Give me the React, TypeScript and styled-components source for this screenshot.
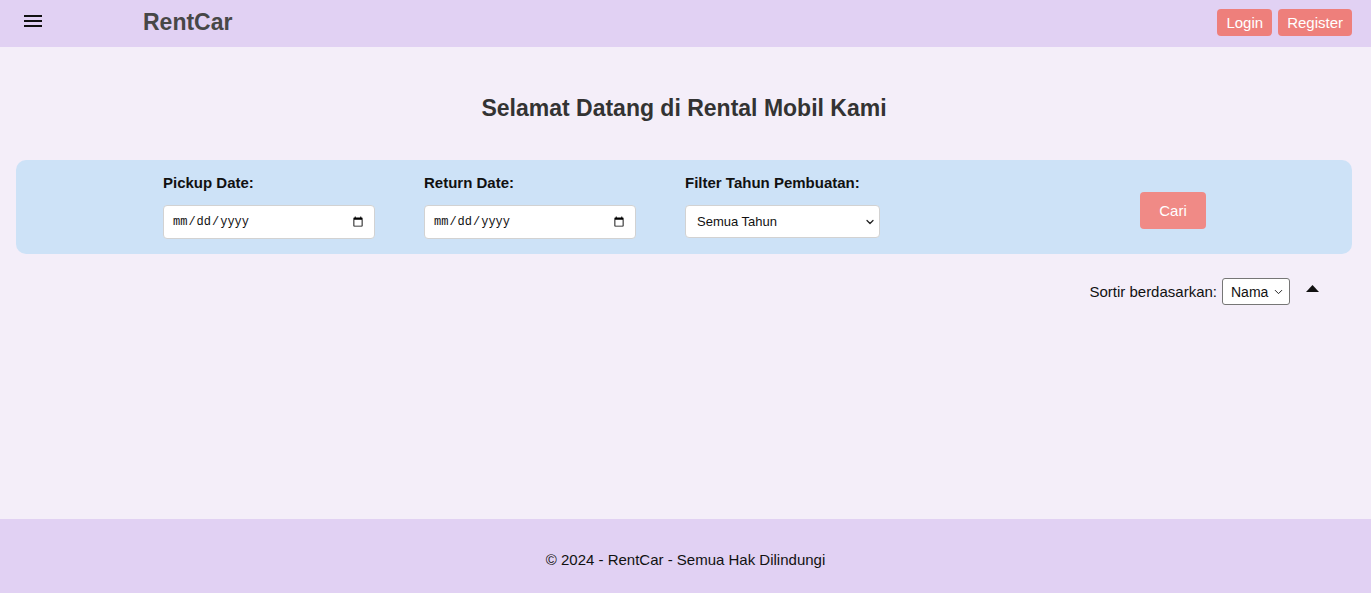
import styled, { createGlobalStyle } from 'styled-components';
import { ChevronDown } from 'lucide-react';

const GlobalStyle = createGlobalStyle`
  body {
    margin: 0;
    font-family: "Liberation Sans", Arial, sans-serif;
    background-color: #f4eef9;
    color: #222;
  }
`;

const Page = styled.div`
  min-height: 100vh;
  display: flex;
  flex-direction: column;
`;

const Header = styled.header`
  height: 47px;
  background-color: #e1d1f3;
  display: flex;
  align-items: center;
  padding: 0 19px 0 24px;
`;

const MenuButton = styled.button`
  background: none;
  border: none;
  padding: 0;
  width: 18px;
  height: 14px;
  margin-top: -6px;
  cursor: pointer;
  display: flex;
`;

const Brand = styled.div`
  margin-left: 101px;
  font-size: 23px;
  font-weight: bold;
  color: #474747;
  margin-top: -2px;
`;

const Nav = styled.nav`
  margin-left: auto;
  display: flex;
  gap: 6px;
  margin-top: -2px;
`;

const HeaderButton = styled.button`
  background-color: #ee7f7b;
  color: #fff;
  border: none;
  border-radius: 4px;
  font-family: "Liberation Sans", Arial, sans-serif;
  font-size: 15px;
  height: 27px;
  padding: 0 9px;
  cursor: pointer;
`;

const Main = styled.main`
  flex: 1;
  padding: 0 19px 0 16px;
`;

const Title = styled.h1`
  margin: 48px 0 38px;
  text-align: center;
  font-size: 23px;
  color: #333;
`;

const FilterPanel = styled.section`
  background-color: #cde2f7;
  border-radius: 10px;
  height: 94px;
  padding: 0 146px 0 147px;
  display: flex;
  align-items: flex-start;
  gap: 49px;
  box-sizing: border-box;
`;

const Field = styled.div`
  display: flex;
  flex-direction: column;
  padding-top: 14px;
`;

const Label = styled.label`
  font-size: 15px;
  font-weight: bold;
  color: #111;
  margin-bottom: 14px;
`;

const DateInput = styled.input`
  width: 212px;
  height: 34px;
  box-sizing: border-box;
  border: 1px solid #d2d2d2;
  border-radius: 4px;
  background: #fff;
  padding: 0 8px;
  font-family: "Liberation Mono", monospace;
  font-size: 12px;
  color: #111;
`;

const SelectWrap = styled.div`
  position: relative;
  display: inline-flex;
  align-items: center;
`;

const SelectChevron = styled.span<{ $right: number }>`
  position: absolute;
  right: ${(p) => p.$right}px;
  top: 50%;
  transform: translateY(-50%);
  display: flex;
  pointer-events: none;
  color: #222;
`;

const YearSelect = styled.select`
  appearance: none;
  width: 195px;
  height: 33px;
  box-sizing: border-box;
  border: 1px solid #d2d2d2;
  border-radius: 4px;
  background: #fff;
  padding: 0 11px;
  font-family: "Liberation Sans", Arial, sans-serif;
  font-size: 13px;
  color: #111;
`;

const SearchButton = styled.button`
  margin-left: auto;
  margin-top: 32px;
  width: 66px;
  height: 37px;
  background-color: #f08a86;
  color: #fff;
  border: none;
  border-radius: 4px;
  font-family: "Liberation Sans", Arial, sans-serif;
  font-size: 15px;
  cursor: pointer;
`;

const SortRow = styled.div`
  display: flex;
  justify-content: flex-end;
  align-items: center;
  margin-top: 24px;
  padding-right: 33px;
  font-size: 15px;
  color: #111;
`;

const SortSelect = styled.select`
  appearance: none;
  margin-left: 5px;
  height: 27px;
  width: 68px;
  box-sizing: border-box;
  border: 1px solid #767676;
  border-radius: 3px;
  background: #fff;
  font-family: "Liberation Sans", Arial, sans-serif;
  font-size: 14px;
  color: #111;
  padding: 0 8px;
`;

const OrderButton = styled.button`
  margin-left: 16px;
  background: none;
  border: none;
  padding: 0;
  display: flex;
  margin-top: -6px;
  cursor: pointer;
`;

const Footer = styled.footer`
  height: 74px;
  background-color: #e1d1f3;
  display: flex;
  align-items: center;
  justify-content: center;
  font-size: 15px;
  color: #111;
  padding-top: 6px;
  box-sizing: border-box;
`;

export default function App() {
  return (
    <Page>
      <GlobalStyle />
      <Header>
        <MenuButton aria-label="menu">
          <svg width="18" height="14" viewBox="0 0 18 14">
            <rect x="0" y="1" width="18" height="2" fill="#111" />
            <rect x="0" y="6" width="18" height="2" fill="#111" />
            <rect x="0" y="11" width="18" height="2" fill="#111" />
          </svg>
        </MenuButton>
        <Brand>RentCar</Brand>
        <Nav>
          <HeaderButton>Login</HeaderButton>
          <HeaderButton>Register</HeaderButton>
        </Nav>
      </Header>
      <Main>
        <Title>Selamat Datang di Rental Mobil Kami</Title>
        <FilterPanel>
          <Field>
            <Label htmlFor="pickup">Pickup Date:</Label>
            <DateInput id="pickup" type="date" />
          </Field>
          <Field>
            <Label htmlFor="return">Return Date:</Label>
            <DateInput id="return" type="date" />
          </Field>
          <Field>
            <Label htmlFor="year">Filter Tahun Pembuatan:</Label>
            <SelectWrap>
              <YearSelect id="year" defaultValue="">
                <option value="">Semua Tahun</option>
                <option value="2024">2024</option>
                <option value="2023">2023</option>
                <option value="2022">2022</option>
              </YearSelect>
              <SelectChevron $right={4}>
                <ChevronDown size={12} strokeWidth={2.5} />
              </SelectChevron>
            </SelectWrap>
          </Field>
          <SearchButton>Cari</SearchButton>
        </FilterPanel>
        <SortRow>
          <span>Sortir berdasarkan:</span>
          <SelectWrap>
            <SortSelect defaultValue="nama">
              <option value="nama">Nama</option>
              <option value="harga">Harga</option>
              <option value="tahun">Tahun</option>
            </SortSelect>
            <SelectChevron $right={5}>
              <ChevronDown size={13} strokeWidth={1.8} />
            </SelectChevron>
          </SelectWrap>
          <OrderButton aria-label="urutan">
            <svg width="13" height="7" viewBox="0 0 13 7">
              <polygon points="6.5,0 13,7 0,7" fill="#111" />
            </svg>
          </OrderButton>
        </SortRow>
      </Main>
      <Footer>© 2024 - RentCar - Semua Hak Dilindungi</Footer>
    </Page>
  );
}
